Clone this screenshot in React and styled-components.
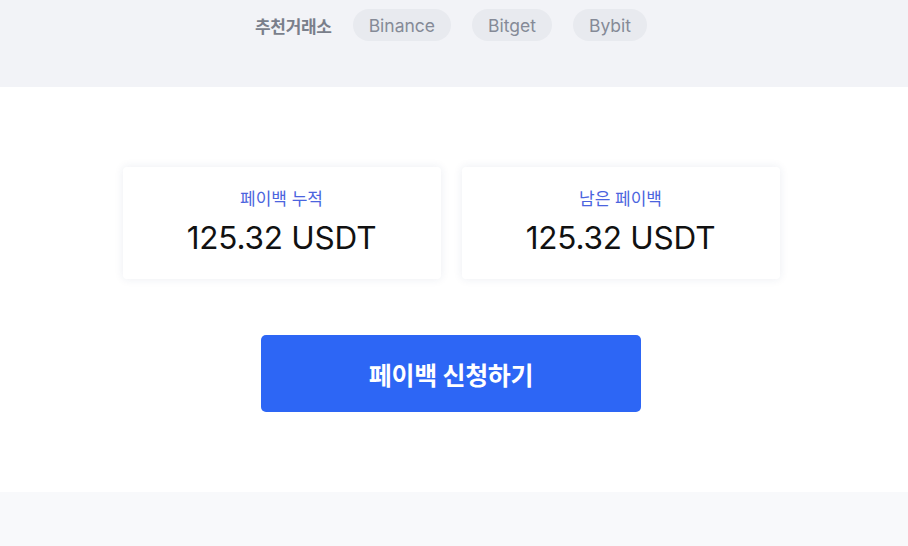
import React from "react";
import styled, { createGlobalStyle } from "styled-components";

const GlobalStyle = createGlobalStyle`
  html, body {
    margin: 0;
    padding: 0;
    background: #ffffff;
    font-family: "Inter", "Noto Sans CJK KR", sans-serif;
  }
`;

const Page = styled.div`
  display: flex;
  flex-direction: column;
  min-height: 546px;
`;

const TopBand = styled.div`
  height: 87px;
  background: #f2f3f7;
  display: flex;
  justify-content: center;
  align-items: flex-start;
  padding: 9px 6px 0 0;
  box-sizing: border-box;
`;

const ExchangeRow = styled.div`
  display: flex;
  align-items: center;
  gap: 21px;
`;

const ExchangeLabel = styled.span`
  font-size: 17px;
  font-weight: 700;
  color: #7a7f8b;
  letter-spacing: -0.3px;
`;

const Pill = styled.span`
  display: inline-flex;
  align-items: center;
  justify-content: center;
  height: 32px;
  padding: 0 16px;
  border-radius: 16px;
  background: #e8eaef;
  color: #858a97;
  font-size: 17.5px;
`;

const Main = styled.div`
  background: #ffffff;
  height: 405px;
  display: flex;
  flex-direction: column;
  align-items: center;
  padding: 80px 6px 0 0;
  box-sizing: border-box;
`;

const Cards = styled.div`
  display: flex;
  gap: 21px;
`;

const Card = styled.div`
  width: 318px;
  height: 112px;
  box-sizing: border-box;
  background: #ffffff;
  border-radius: 4px;
  box-shadow: 0 0 10px rgba(30, 50, 110, 0.09);
  display: flex;
  flex-direction: column;
  align-items: center;
  padding-top: 20px;
`;

const CardLabel = styled.div`
  font-size: 17px;
  color: #4b64de;
  line-height: 24px;
`;

const CardValue = styled.div`
  margin-top: 7px;
  font-size: 31.5px;
  color: #111111;
  line-height: 40px;
  letter-spacing: -0.2px;
`;

const ApplyButton = styled.button`
  margin-top: 56px;
  width: 380px;
  height: 77px;
  border: none;
  border-radius: 5px;
  background: #2d66f5;
  color: #ffffff;
  font-family: "Inter", "Noto Sans CJK KR", sans-serif;
  font-size: 25px;
  font-weight: 700;
  letter-spacing: -0.3px;
  cursor: pointer;
`;

const Footer = styled.div`
  flex: 1;
  background: #f8f9fb;
  height: 54px;
`;

const exchanges = ["Binance", "Bitget", "Bybit"];

const stats = [
  { label: "페이백 누적", value: "125.32 USDT" },
  { label: "남은 페이백", value: "125.32 USDT" },
];

export default function App() {
  return (
    <>
      <GlobalStyle />
      <Page>
        <TopBand>
          <ExchangeRow>
            <ExchangeLabel>추천거래소</ExchangeLabel>
            {exchanges.map((name) => (
              <Pill key={name}>{name}</Pill>
            ))}
          </ExchangeRow>
        </TopBand>
        <Main>
          <Cards>
            {stats.map((s) => (
              <Card key={s.label}>
                <CardLabel>{s.label}</CardLabel>
                <CardValue>{s.value}</CardValue>
              </Card>
            ))}
          </Cards>
          <ApplyButton>페이백 신청하기</ApplyButton>
        </Main>
        <Footer />
      </Page>
    </>
  );
}
